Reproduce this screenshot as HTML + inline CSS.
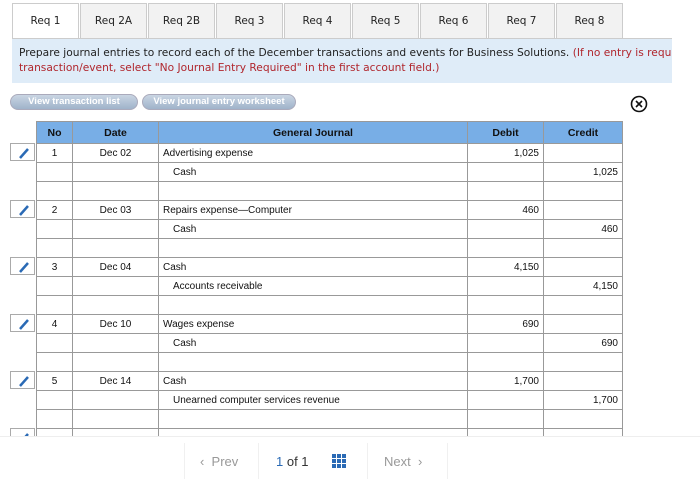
<!DOCTYPE html>
<html><head><style>
body{margin:0;width:700px;height:483px;background:#fff;font-family:"Liberation Sans",Arial,sans-serif;position:relative;overflow:hidden}
.tabs{position:absolute;left:12px;top:3px;height:36px;display:flex}
.tab{width:65px;height:35px;border:1px solid #ccc;border-bottom:none;background:#f2f2f2;margin-right:1px;text-align:center;line-height:35px;color:#222;font-family:"DejaVu Sans",sans-serif;font-size:10.5px}
.tab.a{background:#fff}
.tabline{position:absolute;left:12px;top:38px;width:660px;border-top:1px solid #ccc}
.info{position:absolute;left:12px;top:39px;width:660px;height:44px;background:#dfecf8;font-family:"DejaVu Sans",sans-serif;font-size:10.65px;line-height:15px;color:#222;padding:6px 0 0 7px;box-sizing:border-box;white-space:nowrap;overflow:hidden}
.info span{color:#b0262d}
.btn{position:absolute;top:94px;height:14px;border-radius:8px;background:linear-gradient(#c9d5e3,#9fb3ca);color:#fff;font-size:9.5px;font-weight:bold;line-height:14px;text-align:center;border:1px solid #aab}
table{position:absolute;left:36px;top:121px;border-collapse:collapse;font-size:10px;color:#111}
td,th{border:1px solid #999;height:19px;padding:0 4px;box-sizing:border-box}
th{background:#78aee6;height:22px;font-size:10.5px}
.r{text-align:right}.c{text-align:center}
.ind{padding-left:14px}
.pen{position:absolute;left:10px;width:25px;height:18px;border:1px solid #aaa;box-sizing:border-box;background:#fff}
.pager{position:absolute;left:0;top:436px;width:700px;height:47px;background:#fff;border-top:1px solid #eee}
</style></head><body>
<div class="tabs">
<div class="tab a">Req 1</div><div class="tab">Req 2A</div><div class="tab">Req 2B</div><div class="tab">Req 3</div><div class="tab">Req 4</div><div class="tab">Req 5</div><div class="tab">Req 6</div><div class="tab">Req 7</div><div class="tab">Req 8</div>
</div>
<div class="tabline"></div>
<div class="info">Prepare journal entries to record each of the December transactions and events for Business Solutions. <span>(If no entry is requir-</span><br><span>transaction/event, select "No Journal Entry Required" in the first account field.)</span></div>
<div class="btn" style="left:10px;width:126px">View transaction list</div>
<div class="btn" style="left:142px;width:152px">View journal entry worksheet</div>
<svg style="position:absolute;left:630px;top:95px" width="18" height="18" viewBox="0 0 18 18"><circle cx="9" cy="9" r="7.5" fill="none" stroke="#111" stroke-width="1.6"/><path d="M6 6L12 12M12 6L6 12" stroke="#111" stroke-width="1.6"/></svg>
<table>
<tr><th style="width:36px">No</th><th style="width:86px">Date</th><th style="width:309px">General Journal</th><th style="width:76px">Debit</th><th style="width:79px">Credit</th></tr>
<tr><td class="c">1</td><td class="c">Dec 02</td><td>Advertising expense</td><td class="r">1,025</td><td></td></tr>
<tr><td></td><td></td><td class="ind">Cash</td><td></td><td class="r">1,025</td></tr>
<tr><td></td><td></td><td></td><td></td><td></td></tr>
<tr><td class="c">2</td><td class="c">Dec 03</td><td>Repairs expense—Computer</td><td class="r">460</td><td></td></tr>
<tr><td></td><td></td><td class="ind">Cash</td><td></td><td class="r">460</td></tr>
<tr><td></td><td></td><td></td><td></td><td></td></tr>
<tr><td class="c">3</td><td class="c">Dec 04</td><td>Cash</td><td class="r">4,150</td><td></td></tr>
<tr><td></td><td></td><td class="ind">Accounts receivable</td><td></td><td class="r">4,150</td></tr>
<tr><td></td><td></td><td></td><td></td><td></td></tr>
<tr><td class="c">4</td><td class="c">Dec 10</td><td>Wages expense</td><td class="r">690</td><td></td></tr>
<tr><td></td><td></td><td class="ind">Cash</td><td></td><td class="r">690</td></tr>
<tr><td></td><td></td><td></td><td></td><td></td></tr>
<tr><td class="c">5</td><td class="c">Dec 14</td><td>Cash</td><td class="r">1,700</td><td></td></tr>
<tr><td></td><td></td><td class="ind">Unearned computer services revenue</td><td></td><td class="r">1,700</td></tr>
<tr><td></td><td></td><td></td><td></td><td></td></tr>
<tr><td></td><td></td><td></td><td></td><td></td></tr>
</table>
<div class="pen" style="top:143px"><svg width="25" height="18"><path d="M9 14L17 5" stroke="#2a6ab5" stroke-width="2.5"/></svg></div>
<div class="pen" style="top:200px"><svg width="25" height="18"><path d="M9 14L17 5" stroke="#2a6ab5" stroke-width="2.5"/></svg></div>
<div class="pen" style="top:257px"><svg width="25" height="18"><path d="M9 14L17 5" stroke="#2a6ab5" stroke-width="2.5"/></svg></div>
<div class="pen" style="top:314px"><svg width="25" height="18"><path d="M9 14L17 5" stroke="#2a6ab5" stroke-width="2.5"/></svg></div>
<div class="pen" style="top:371px"><svg width="25" height="18"><path d="M9 14L17 5" stroke="#2a6ab5" stroke-width="2.5"/></svg></div>
<div class="pen" style="top:428px"><svg width="25" height="18"><path d="M9 14L17 5" stroke="#2a6ab5" stroke-width="2.5"/></svg></div>
<div class="pager">
<div style="position:absolute;left:184px;top:6px;width:262px;height:36px;border-left:1px solid #f0f0f0;border-right:1px solid #f0f0f0"></div>
<div style="position:absolute;left:258px;top:6px;height:36px;border-left:1px solid #f0f0f0"></div>
<div style="position:absolute;left:367px;top:6px;height:36px;border-left:1px solid #f0f0f0"></div>
<div style="position:absolute;left:200px;top:17px;font-size:13px;color:#999">&#x2039; &nbsp;Prev</div>
<div style="position:absolute;left:276px;top:17px;font-size:13px;color:#333"><span style="color:#2a6ab5">1</span> of 1</div>
<svg style="position:absolute;left:332px;top:17px" width="14" height="14"><g fill="#2a6ab5"><rect x="0" y="0" width="4" height="4"/><rect x="5" y="0" width="4" height="4"/><rect x="10" y="0" width="4" height="4"/><rect x="0" y="5" width="4" height="4"/><rect x="5" y="5" width="4" height="4"/><rect x="10" y="5" width="4" height="4"/><rect x="0" y="10" width="4" height="4"/><rect x="5" y="10" width="4" height="4"/><rect x="10" y="10" width="4" height="4"/></g></svg>
<div style="position:absolute;left:384px;top:17px;font-size:13px;color:#999">Next &nbsp;&#x203A;</div>
</div>
</body></html>
